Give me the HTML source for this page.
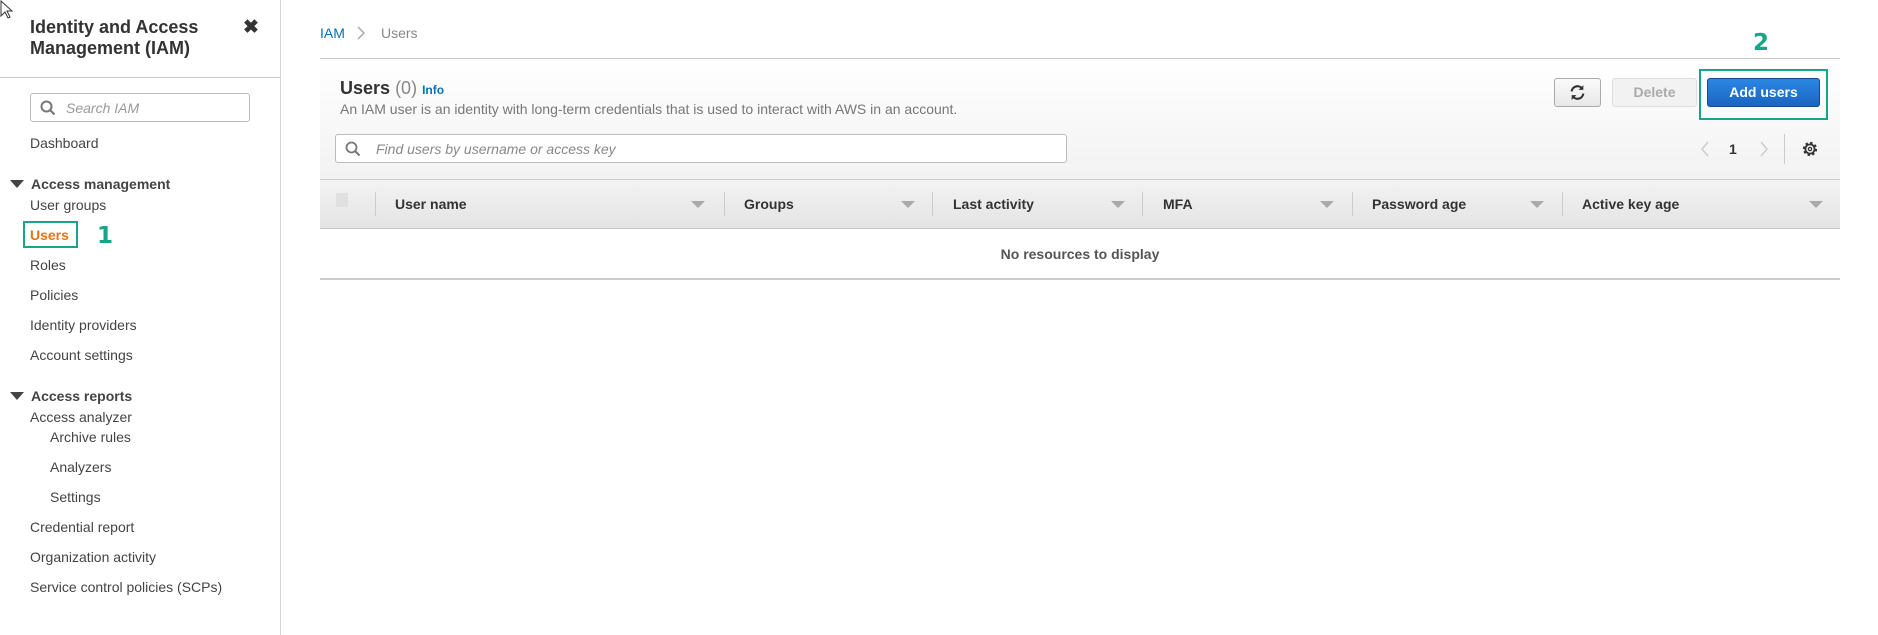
<!DOCTYPE html>
<html><head><meta charset="utf-8"><style>
*{margin:0;padding:0;box-sizing:border-box}
body{width:1878px;height:635px;background:#fff;font-family:"Liberation Sans",sans-serif;color:#444;position:relative;overflow:hidden;font-size:14px}
.a{position:absolute;white-space:nowrap}
.s{left:30px;font-size:14px;color:#444;line-height:16px}
.b{font-weight:bold}
.tri{position:absolute;width:0;height:0;border-left:7px solid transparent;border-right:7px solid transparent;border-top:8px solid #444}
.ctri{position:absolute;width:0;height:0;border-left:7px solid transparent;border-right:7px solid transparent;border-top:7px solid #aaa;top:201px}
.sep{position:absolute;width:1px;height:24px;background:#ccc;top:192px}
.h{position:absolute;top:196px;font-weight:bold;font-size:14px;color:#333}
</style></head><body>
<div class="a" style="left:280px;top:0;width:1px;height:635px;background:#d5d5d5"></div>
<div class="a b" style="left:30px;top:17px;font-size:18px;line-height:21px;color:#333">Identity and Access<br>Management (IAM)</div>
<div class="a b" style="left:243px;top:16px;font-size:19px;color:#333">✖</div>
<div class="a" style="left:0;top:77px;width:280px;height:1px;background:#ccc"></div>
<div class="a" style="left:30px;top:93px;width:220px;height:29px;border:1px solid #bbb;border-radius:3px"></div>
<svg class="a" style="left:40px;top:100px" width="16" height="16"><circle cx="6.5" cy="6.5" r="5" fill="none" stroke="#777" stroke-width="2"/><path d="M10 10l4.5 4.5" stroke="#777" stroke-width="2.2"/></svg>
<div class="a" style="left:66px;top:100px;font-style:italic;color:#999;font-size:14px">Search IAM</div>
<div class="a s" style="top:135px">Dashboard</div>
<div class="tri" style="left:10px;top:180px"></div>
<div class="a s b" style="left:31px;top:176px;color:#444">Access management</div>
<div class="a s" style="top:197px">User groups</div>
<div class="a" style="left:23px;top:221px;width:55px;height:27px;border:2px solid #16a589"></div>
<div class="a s b" style="top:227px;color:#ec7211">Users</div>
<div class="a b" style="left:97px;top:223px;font-size:23px;color:#16a589;font-family:'DejaVu Sans',sans-serif">1</div>
<div class="a s" style="top:257px">Roles</div>
<div class="a s" style="top:287px">Policies</div>
<div class="a s" style="top:317px">Identity providers</div>
<div class="a s" style="top:347px">Account settings</div>
<div class="tri" style="left:10px;top:392px"></div>
<div class="a s b" style="left:31px;top:388px">Access reports</div>
<div class="a s" style="top:409px">Access analyzer</div>
<div class="a s" style="left:50px;top:429px">Archive rules</div>
<div class="a s" style="left:50px;top:459px">Analyzers</div>
<div class="a s" style="left:50px;top:489px">Settings</div>
<div class="a s" style="top:519px">Credential report</div>
<div class="a s" style="top:549px">Organization activity</div>
<div class="a s" style="top:579px">Service control policies (SCPs)</div>
<div class="a" style="left:320px;top:25px;font-size:14px;color:#0073bb">IAM</div>
<svg class="a" style="left:356px;top:26px" width="10" height="14"><path d="M2 1l6 6-6 6" fill="none" stroke="#aaa" stroke-width="1.5"/></svg>
<div class="a" style="left:381px;top:25px;font-size:14px;color:#888">Users</div>
<div class="a b" style="left:1753px;top:30px;font-size:23px;color:#16a589;font-family:'DejaVu Sans',sans-serif">2</div>
<div class="a" style="left:320px;top:58px;width:1520px;height:122px;background:linear-gradient(#fff,#f2f2f2);border-top:1px solid #ccc"></div>
<div class="a" style="left:340px;top:78px;font-size:18px;color:#333"><b>Users</b> <span style="color:#888">(0)</span> <span style="font-size:12px;color:#0073bb;font-weight:bold">Info</span></div>
<div class="a" style="left:340px;top:101px;font-size:14px;color:#777">An IAM user is an identity with long-term credentials that is used to interact with AWS in an account.</div>
<div class="a" style="left:335px;top:134px;width:732px;height:29px;border:1px solid #bbb;border-radius:3px;background:#fff"></div>
<svg class="a" style="left:345px;top:141px" width="16" height="16"><circle cx="6.5" cy="6.5" r="5" fill="none" stroke="#777" stroke-width="1.8"/><path d="M10 10l4.5 4.5" stroke="#777" stroke-width="2"/></svg>
<div class="a" style="left:376px;top:141px;font-size:14px;color:#888;font-style:italic">Find users by username or access key</div>
<div class="a" style="left:1554px;top:78px;width:47px;height:29px;border:1px solid #aaa;border-radius:3px;background:linear-gradient(#fafafa,#e8e8e8)"></div>
<svg class="a" style="left:1569px;top:84px" width="17" height="17" viewBox="0 0 16 16"><path d="M2.5 7a5.5 5.5 0 0 1 10-2.5M13.5 9a5.5 5.5 0 0 1-10 2.5" fill="none" stroke="#333" stroke-width="2"/><path d="M13.5 1v4.5H9zM2.5 15v-4.5H7z" fill="#333"/></svg>
<div class="a" style="left:1612px;top:78px;width:85px;height:29px;border:1px solid #ddd;border-radius:3px;background:#f2f2f2;color:#aaa;font-weight:bold;text-align:center;line-height:27px">Delete</div>
<div class="a" style="left:1699px;top:69px;width:129px;height:51px;border:2px solid #16a589"></div>
<div class="a" style="left:1707px;top:78px;width:113px;height:29px;border:1px solid #154c91;border-radius:3px;background:linear-gradient(#2b87e3,#1a64c0);color:#fff;font-weight:bold;text-align:center;line-height:27px;font-size:14px">Add users</div>
<svg class="a" style="left:1700px;top:140px" width="10" height="18"><path d="M8 2L2 9l6 7" fill="none" stroke="#ccc" stroke-width="1.5"/></svg>
<div class="a b" style="left:1729px;top:141px;font-size:14px;color:#333">1</div>
<svg class="a" style="left:1759px;top:140px" width="10" height="18"><path d="M2 2l6 7-6 7" fill="none" stroke="#ccc" stroke-width="1.5"/></svg>
<div class="a" style="left:1784px;top:134px;width:1px;height:30px;background:#ccc"></div>
<svg class="a" style="left:1801px;top:140px" width="18" height="18" viewBox="0 0 18 18"><circle cx="9" cy="9" r="6" fill="none" stroke="#333" stroke-width="2.2" stroke-dasharray="2.4 2.3"/><circle cx="9" cy="9" r="4.6" fill="none" stroke="#333" stroke-width="1.8"/><circle cx="9" cy="9" r="1.6" fill="none" stroke="#333" stroke-width="1.3"/></svg>
<div class="a" style="left:320px;top:179px;width:1520px;height:50px;background:linear-gradient(#f3f3f3,#e4e4e4);border-top:1px solid #ccc;border-bottom:1px solid #c6c6c6"></div>
<div class="a" style="left:336px;top:193px;width:12px;height:14px;background:#e0e0e0"></div>
<div class="sep" style="left:375px"></div>
<div class="h" style="left:395px">User name</div><div class="ctri" style="left:691px"></div>
<div class="sep" style="left:724px"></div>
<div class="h" style="left:744px">Groups</div><div class="ctri" style="left:901px"></div>
<div class="sep" style="left:932px"></div>
<div class="h" style="left:953px">Last activity</div><div class="ctri" style="left:1111px"></div>
<div class="sep" style="left:1142px"></div>
<div class="h" style="left:1163px">MFA</div><div class="ctri" style="left:1320px"></div>
<div class="sep" style="left:1352px"></div>
<div class="h" style="left:1372px">Password age</div><div class="ctri" style="left:1530px"></div>
<div class="sep" style="left:1562px"></div>
<div class="h" style="left:1582px">Active key age</div><div class="ctri" style="left:1809px"></div>
<div class="a b" style="left:320px;width:1520px;top:246px;text-align:center;color:#555;font-size:14px">No resources to display</div>
<div class="a" style="left:320px;top:278px;width:1520px;height:2px;background:#ccc"></div>
<svg class="a" style="left:0;top:0" width="14" height="20"><path d="M1 1v15l4-4 3 6 2-1-3-6h5z" fill="#fff" stroke="#333"/></svg>
</body></html>
